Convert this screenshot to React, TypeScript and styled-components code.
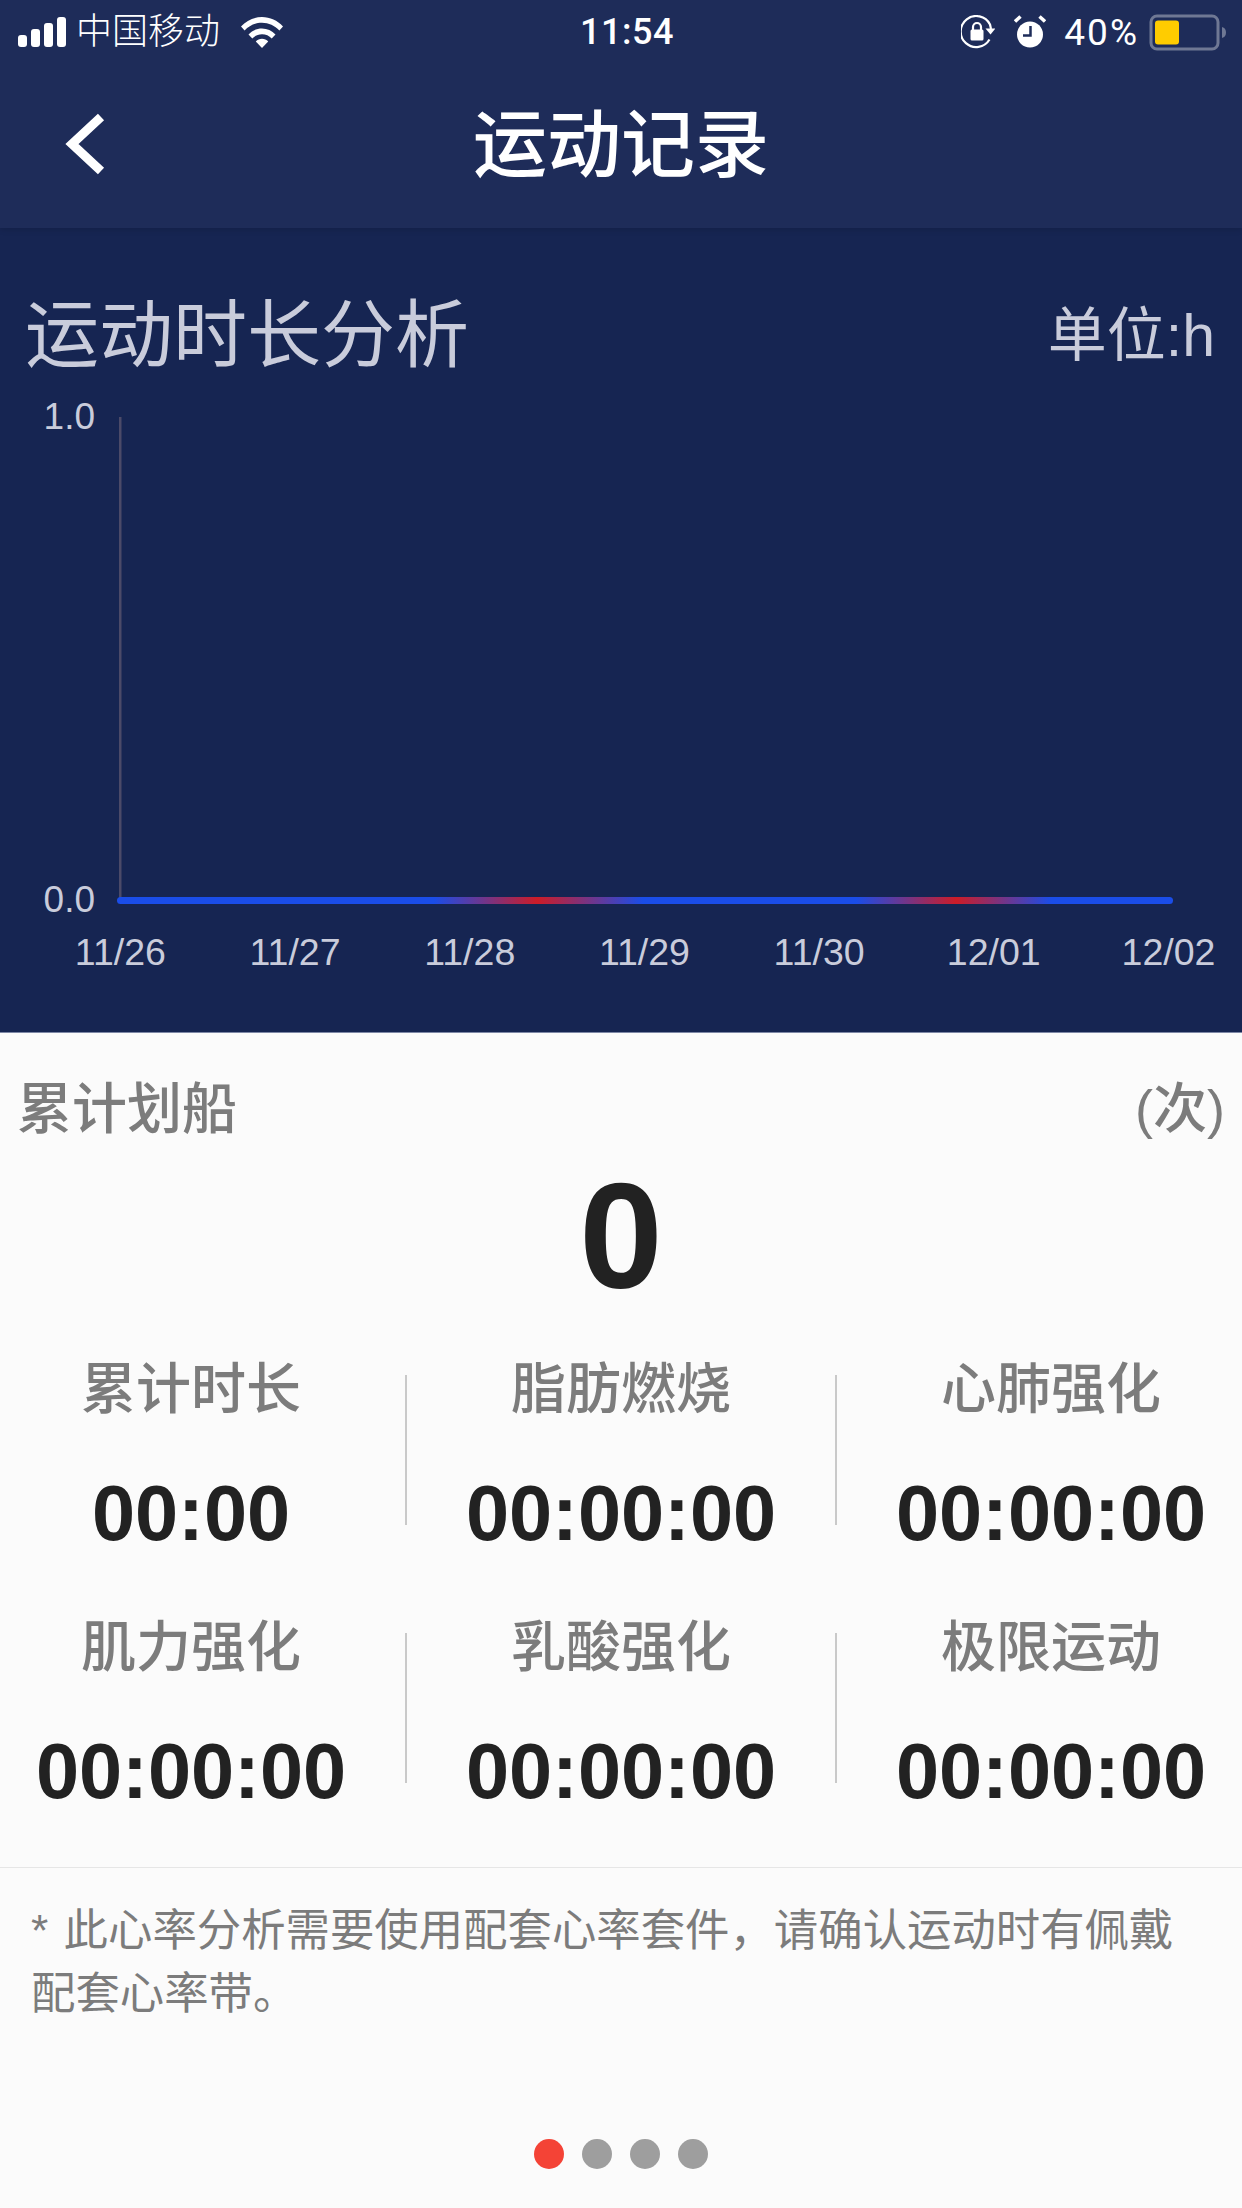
import React from "react";
import styled, { createGlobalStyle } from "styled-components";

const Global = createGlobalStyle`
  html, body { margin: 0; padding: 0; background: #fbfbfb; }
  * { box-sizing: border-box; }
`;

const CJK = `"Liberation Sans", "Noto Sans CJK SC", sans-serif`;

const Page = styled.div`
  width: 1242px;
  height: 2208px;
  overflow: hidden;
  font-family: ${CJK};
  background: #fbfbfb;
  display: flex;
  flex-direction: column;
`;

const Header = styled.header`
  position: relative;
  z-index: 1;
  height: 228px;
  background: #1e2c59;
  box-shadow: 0 2px 6px rgba(0, 0, 0, 0.12);
  display: flex;
  flex-direction: column;
  color: #fff;
`;

const StatusBar = styled.div`
  height: 64px;
  padding: 0 15px 0 18px;
  display: grid;
  grid-template-columns: 1fr auto 1fr;
  align-items: center;
  font-size: 36px;
`;

const StatusLeft = styled.div`
  display: flex;
  align-items: center;
`;

const Carrier = styled.span`
  margin-left: 9px;
  margin-right: 21px;
  font-weight: 300;
  line-height: 44px;
`;

const Clock = styled.span`
  margin-left: 9px;
  font-family: Roboto, "Liberation Sans", sans-serif;
  font-weight: 500;
  letter-spacing: 0.5px;
`;

const StatusRight = styled.div`
  display: flex;
  align-items: center;
  justify-content: flex-end;
`;

const Percent = styled.span`
  margin: 0 10px 0 18px;
  font-size: 37px;
  font-family: Roboto, "Liberation Sans", sans-serif;
  letter-spacing: 2px;
`;

const NavBar = styled.nav`
  flex: 1;
  display: grid;
  grid-template-columns: 1fr auto 1fr;
  align-items: center;
  padding: 0 64px 4px;
`;

const NavTitle = styled.h1`
  margin: 0 0 11px;
  font-size: 74px;
  line-height: 100px;
  font-weight: 500;
  font-family: "Noto Sans CJK SC", sans-serif;
`;

const ChartPanel = styled.section`
  height: 805px;
  padding-top: 66px;
  background: #162552;
  border-bottom: 1px solid #7e88a6;
  color: #c9ccdb;
`;

const ChartHead = styled.div`
  height: 84px;
  padding: 0 27px 0 25px;
  display: flex;
  justify-content: space-between;
  align-items: center;
`;

const ChartTitle = styled.h2`
  margin: 0 0 14px;
  font-size: 74px;
  font-weight: 400;
  font-family: "Noto Sans CJK SC", sans-serif;
  line-height: 84px;
`;

const ChartUnit = styled.span`
  font-size: 59px;
  line-height: 84px;
`;

const Plot = styled.div`
  margin-top: 19px;
  height: 523px;
  display: flex;
`;

const YAxis = styled.div`
  width: 95px;
  display: flex;
  flex-direction: column;
  justify-content: space-between;
  align-items: flex-end;
  font-size: 37px;
  line-height: 40px;
`;

const PlotSvg = styled.svg`
  display: block;
  margin-left: 22px;
`;

const XAxis = styled.div`
  margin-top: 12px;
  padding-left: 33px;
  display: grid;
  grid-template-columns: repeat(7, 174.7px);
`;

const XTick = styled.span`
  text-align: center;
  font-size: 37.5px;
  line-height: 40px;
`;

const Summary = styled.section`
  flex: 1;
  display: flex;
  flex-direction: column;
  color: #7c7c7c;
`;

const TotalHead = styled.div`
  margin-top: 36px;
  padding: 0 17px;
  height: 70px;
  display: flex;
  justify-content: space-between;
  align-items: center;
  font-size: 55px;
  font-weight: 500;
  font-family: "Noto Sans CJK SC", sans-serif;
`;

const TotalUnit = styled.span`
  font-family: ${CJK};
  font-size: 54px;
`;

const TotalValue = styled.div`
  margin-top: 17px;
  height: 160px;
  line-height: 160px;
  text-align: center;
  font-size: 150px;
  font-weight: 700;
  color: #222;
`;

const StatGrid = styled.div`
  margin-top: 5px;
  display: grid;
  grid-template-columns: 428px 2px 428px 2px 428px;
  grid-auto-rows: 258px;
  justify-content: center;
`;

const Stat = styled.div`
  padding-top: 28px;
  display: flex;
  flex-direction: column;
  align-items: center;
`;

const StatLabel = styled.span`
  height: 70px;
  line-height: 70px;
  font-size: 55px;
  font-family: "Noto Sans CJK SC", sans-serif;
  font-weight: 500;
`;

const StatValue = styled.span`
  margin-top: 49px;
  height: 90px;
  line-height: 90px;
  font-size: 77.5px;
  font-weight: 700;
  color: #222;
`;

const Divider = styled.i`
  align-self: center;
  height: 150px;
  background: #c9c9c9;
`;

const Note = styled.p`
  margin: 30px 0 0;
  padding: 31px 30px 0 31px;
  border-top: 1px solid #e6e6e6;
  font-size: 44.4px;
  line-height: 63px;
  word-spacing: 3px;
  color: #7c7c7c;
`;

const Dots = styled.div`
  margin-top: 114px;
  display: flex;
  justify-content: center;
  gap: 18px;
`;

const Dot = styled.span<{ $active?: boolean }>`
  width: 30px;
  height: 30px;
  border-radius: 50%;
  background: ${(p) => (p.$active ? "#f44336" : "#9e9e9e")};
`;

const AlarmIcon = styled.svg`
  margin-left: 19px;
`;

const dates = ["11/26", "11/27", "11/28", "11/29", "11/30", "12/01", "12/02"];
const stats = [
  ["累计时长", "00:00"],
  ["脂肪燃烧", "00:00:00"],
  ["心肺强化", "00:00:00"],
  ["肌力强化", "00:00:00"],
  ["乳酸强化", "00:00:00"],
  ["极限运动", "00:00:00"],
];

const Signal = () => (
  <svg width="49" height="30" viewBox="0 0 49 30" fill="#fff">
    <rect x="0" y="18" width="9" height="12" rx="3" />
    <rect x="13" y="12" width="9" height="18" rx="3" />
    <rect x="26" y="6" width="9" height="24" rx="3" />
    <rect x="39" y="0" width="9" height="30" rx="3" />
  </svg>
);

const Wifi = () => (
  <svg width="42" height="31" viewBox="0 0 42 31" fill="#fff">
    <path d="M0 9.5C5.5 3.5 13 0 21 0s15.500 3.500 21 9.500l-3.600 4C33.800 8.700 27.700 5.800 21 5.800S8.200 8.700 3.600 13.500z" />
    <path d="M7.500 17.500C11 13.700 15.800 11.500 21 11.500s10 2.200 13.500 6l-3.800 4C28.200 18.800 24.800 17.300 21 17.300s-7.200 1.500-9.700 4.200z" />
    <path d="M14.800 24.500c1.600-1.700 3.800-2.700 6.200-2.700s4.600 1 6.200 2.700L21 31z" />
  </svg>
);

const RotationLock = () => (
  <svg width="34" height="34" viewBox="0 0 34 34" fill="none">
    <path d="M28.500 24.500A15.500 15.500 0 1 1 29 9.500L30 14" stroke="#fff" strokeWidth="2.200" />
    <path d="M24.500 13.500h10l-5 6z" fill="#fff" />
    <rect x="9.500" y="14.500" width="13" height="11" rx="1.500" fill="#fff" />
    <path d="M12 15v-3a4 4 0 0 1 8 0v3" stroke="#fff" strokeWidth="2.200" />
  </svg>
);

const Alarm = () => (
  <AlarmIcon width="32" height="34" viewBox="0 0 32 34" fill="none">
    <circle cx="16" cy="19.500" r="13" fill="#fff" />
    <path d="M1 6.500L6.500 1.500M31 6.500L25.500 1.500" stroke="#fff" strokeWidth="3.500" />
    <path d="M16.500 11v9.500H9" stroke="#1e2c59" strokeWidth="2.500" />
  </AlarmIcon>
);

const Battery = () => (
  <svg width="78" height="40" viewBox="0 0 78 40">
    <rect x="2" y="4" width="67" height="33" rx="6" fill="none" stroke="#6f7894" strokeWidth="3" />
    <rect x="6" y="8.500" width="24" height="24" rx="3" fill="#ffcc00" />
    <path d="M73 15c2.500.5 4 2.500 4 5.500s-1.500 5-4 5.500z" fill="#6f7894" />
  </svg>
);

const Back = () => (
  <svg width="42" height="62" viewBox="0 0 42 62" fill="none">
    <path d="M37 4L8 31l29 27" stroke="#fff" strokeWidth="9" />
  </svg>
);

export default function App() {
  return (
    <Page>
      <Global />
      <Header>
        <StatusBar>
          <StatusLeft>
            <Signal />
            <Carrier>中国移动</Carrier>
            <Wifi />
          </StatusLeft>
          <Clock>11:54</Clock>
          <StatusRight>
            <RotationLock />
            <Alarm />
            <Percent>40%</Percent>
            <Battery />
          </StatusRight>
        </StatusBar>
        <NavBar>
          <Back />
          <NavTitle>运动记录</NavTitle>
        </NavBar>
      </Header>
      <ChartPanel>
        <ChartHead>
          <ChartTitle>运动时长分析</ChartTitle>
          <ChartUnit>单位:h</ChartUnit>
        </ChartHead>
        <Plot>
          <YAxis>
            <span>1.0</span>
            <span>0.0</span>
          </YAxis>
          <PlotSvg width="1060" height="523" viewBox="0 0 1060 523">
            <defs>
              <linearGradient id="line" x1="0" x2="1" y1="0" y2="0">
                <stop offset="0" stopColor="#1a4de8" />
                <stop offset="0.3" stopColor="#1a4de8" />
                <stop offset="0.398" stopColor="#cc1c28" />
                <stop offset="0.498" stopColor="#1a4de8" />
                <stop offset="0.7" stopColor="#1a4de8" />
                <stop offset="0.795" stopColor="#cc1c28" />
                <stop offset="0.885" stopColor="#1a4de8" />
                <stop offset="1" stopColor="#1a4de8" />
              </linearGradient>
            </defs>
            <rect x="2" y="20" width="2.500" height="483" fill="#4b4a68" />
            <rect x="0" y="500" width="1056" height="7" rx="3.500" fill="url(#line)" />
          </PlotSvg>
        </Plot>
        <XAxis>
          {dates.map((d) => (
            <XTick key={d}>{d}</XTick>
          ))}
        </XAxis>
      </ChartPanel>
      <Summary>
        <TotalHead>
          <span>累计划船</span>
          <TotalUnit>(次)</TotalUnit>
        </TotalHead>
        <TotalValue>0</TotalValue>
        <StatGrid>
          {stats.map(([label, value], i) => (
            <React.Fragment key={label}>
              <Stat>
                <StatLabel>{label}</StatLabel>
                <StatValue>{value}</StatValue>
              </Stat>
              {i % 3 !== 2 && <Divider />}
            </React.Fragment>
          ))}
        </StatGrid>
        <Note>* 此心率分析需要使用配套心率套件，请确认运动时有佩戴配套心率带。</Note>
        <Dots>
          <Dot $active />
          <Dot />
          <Dot />
          <Dot />
        </Dots>
      </Summary>
    </Page>
  );
}
